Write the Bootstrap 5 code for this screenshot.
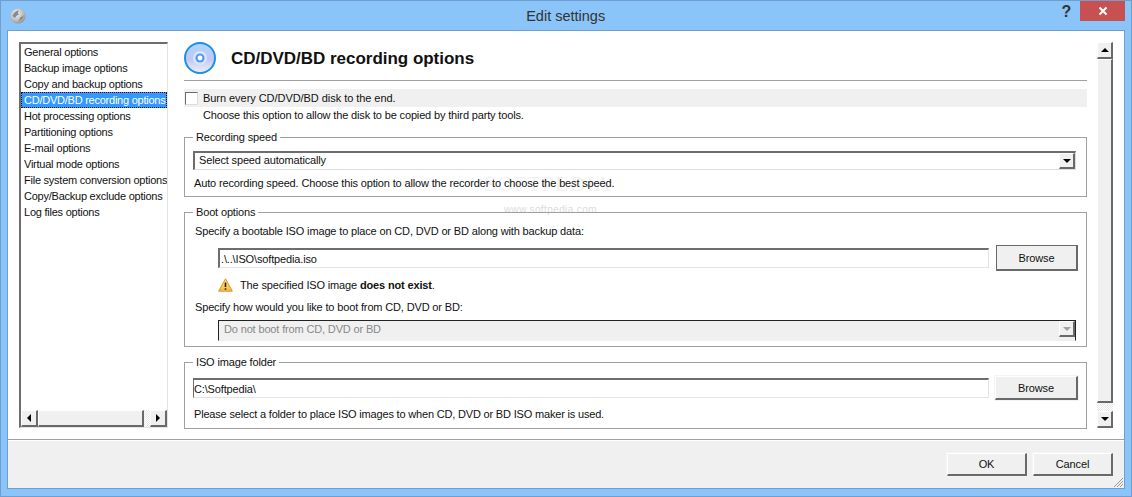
<!DOCTYPE html>
<html><head><meta charset="utf-8">
<link href="https://cdn.jsdelivr.net/npm/bootstrap@5.3.0/dist/css/bootstrap.min.css" rel="stylesheet">
<style>
html,body{margin:0;height:497px;overflow:hidden;background:#8ac4f8}
body{font-family:"Liberation Sans",Arial,sans-serif;font-size:11px;letter-spacing:-.15px;line-height:16px;color:#111}
.wnd{height:497px;border:1px solid #6f9fd0;display:flex;flex-direction:column;background:#8ac4f8}
.ttl{height:29px;flex:none}
.ttl-name{font-size:14.5px;letter-spacing:0;color:#333;line-height:30px;padding-left:44px}
.ttl-ico{margin:7px 0 0 9px}
.ttl-help{font-weight:700;font-size:16px;color:#333;margin-right:9px;line-height:22px}
.ttl-close{width:45px;height:20px;background:#c75050;margin-right:6px;align-items:center;justify-content:center}
.client{flex:1;margin:0 6px 7px 6px;border:1px solid #6f9fd0;background:#fff;display:flex;flex-direction:column;min-height:0}
.body-a{flex:1;min-height:0;padding:11px 11px 12px 11px;position:relative;z-index:1}
.navbox{width:149px;height:386px;flex:none;border:1px solid #e3e3e3;border-top:2px solid #6d6d6d;border-left:2px solid #6d6d6d;display:flex;flex-direction:column}
.navlist{flex:1;overflow:hidden;border-radius:0}
.navlist .list-group-item.navitem{border:0;padding:0 0 0 3px;margin:0;height:16px;line-height:16px;font-size:11px;letter-spacing:-.24px;white-space:nowrap;overflow:hidden;color:#111;background:transparent}
.navlist .list-group-item.navitem.active{background:#3399ff;color:#fff;outline:1px dotted #111;outline-offset:-1px}
.hscroll{height:17px;background:#f0f0f0;flex:none;display:flex}
.sb-btn{background:#f0f0f0;border:1px solid #fff;border-right:2px solid #696969;border-bottom:2px solid #696969;display:flex;align-items:center;justify-content:center;flex:none}
.hs-btn{width:17px;height:17px}
.hs-thumb{width:106px;height:17px;flex:none}
.hs-gap{flex:1;background:repeating-conic-gradient(#fff 0 25%,#e8e8e8 0 50%) 0 0/2px 2px}
.tri-l{width:0;height:0;border:4px solid transparent;border-right:4px solid #000;border-left:0}
.tri-r{width:0;height:0;border:4px solid transparent;border-left:4px solid #000;border-right:0}
.tri-u{width:0;height:0;border:4px solid transparent;border-bottom:4px solid #000;border-top:0}
.tri-d{width:0;height:0;border:4px solid transparent;border-top:4px solid #000;border-bottom:0}
.tri-dg{border-top-color:#a0a0a0}
.pane{width:903px;flex:none;margin-left:16px}
.hd{height:39px;gap:15px;border-bottom:1px solid #a0a0a0}
.hd-t{font-size:17px;letter-spacing:-.02px;font-weight:700;color:#111;margin:1px 0 0;line-height:32px}
.opt-row{background:#f0f0f0;height:18px;margin-top:8px;padding-left:1px;gap:5px;line-height:18px;letter-spacing:-.05px}
.chk{width:13px;height:13px;background:#fff;border:1px solid #6d6d6d;border-right-color:#ddd;border-bottom-color:#ddd;flex:none}
.opt-sub{padding-left:19px}
.gbox{border:1px solid #a0a0a0;margin:0;padding:0 8px;min-width:0}
.gbox legend{float:none;width:auto;font-size:11px;line-height:14px;margin:0;padding:0 3px;color:#111}
.gb1{margin-top:7px;height:67px}
.gb2{margin-top:8px;height:142px}
.gb3{margin-top:8px;height:74px}
.combo{height:19px;border:2px solid #6d6d6d;border-right:1px solid #ddd;border-bottom:1px solid #ddd;padding:0 0 0 4px;background:#fff;line-height:15px;color:#111;display:flex;justify-content:space-between;margin-right:2px}
.combo-arrow{width:16px;height:16px;background:#f0f0f0;border:1px solid #fff;border-right:2px solid #696969;border-bottom:2px solid #696969;display:flex;align-items:center;justify-content:center;flex:none}
.combo-dis{height:21px;background:#f0f0f0;color:#888;border:1px solid #222;border-bottom-color:#eee;line-height:17px;margin-left:25px;margin-top:5px;padding-left:5px}
.gb1 .combo{margin-top:7px}
.after-combo{margin-top:5px;padding-left:1px}
.fld{border:1px solid #e3e3e3;border-top:2px solid #6d6d6d;border-left:2px solid #6d6d6d;border-radius:0;height:20px;padding:0 0 0 1px;font-size:11px;letter-spacing:-.15px;line-height:16px;color:#111;box-shadow:none;min-width:0}
.fld-iso{padding-left:0;border-left-width:1px}
.pbtn{font-size:11px;letter-spacing:-.15px;line-height:16px;color:#111;background:#f0f0f0;border-radius:0;border:1px solid #fff;border-right:2px solid #696969;border-bottom:2px solid #696969;padding:0;box-shadow:0 0 0 1px #f4f4f4;flex:none}
.pbtn-def{border-color:#696969;border-width:1px 2px 2px 1px;box-shadow:none}
.w-browse{width:83px;height:24px}
.w-browse-d{width:82px;height:26px}
.w-foot{width:80px;height:23px}
.row-boot{gap:7px;margin:6px 0 0 25px}
.row-warn{gap:7px;margin:6px 0 0 25px}
.row-lbl{margin-top:6px;padding-left:2px}
.row-iso{gap:6px;margin-top:7px}
.lbl1{margin-top:4px;padding-left:2px}
.after-iso{margin-top:6px;padding-left:1px;letter-spacing:-.18px}
.vscroll{width:16px;height:386px;flex:none;margin-left:10px;background:#f0f0f0;display:flex;flex-direction:column}
.vs-btn{height:17px;width:16px}
.vs-thumb{height:344px;width:16px}
.vs-gap{flex:1;background:repeating-conic-gradient(#fff 0 25%,#e8e8e8 0 50%) 0 0/2px 2px}
.foot{height:49px;flex:none;background:#f0f0f0;border-top:1px solid #a0a0a0;box-shadow:inset 0 1px 0 #fff;padding:13px 11px 0 0;gap:6px;position:relative;z-index:1}
.grip{position:absolute;right:0;bottom:0;width:12px;height:12px}
.wm{position:absolute;left:503px;top:203px;font-size:10px;color:#dcdcdc;letter-spacing:.4px;line-height:12px;z-index:0}
.wm2{position:absolute;left:483px;top:171px;font-family:"Liberation Serif",serif;font-size:22px;color:#f1f1f1;letter-spacing:1px;line-height:24px;z-index:0}
</style></head>
<body>
<div class="wnd position-relative">
 <div class="ttl d-flex align-items-start">
  <svg class="ttl-ico" width="16" height="16" viewBox="0 0 16 16"><defs><radialGradient id="gl" cx=".4" cy=".35" r=".8"><stop offset="0" stop-color="#f4f4f4"/><stop offset=".6" stop-color="#b8b8b8"/><stop offset="1" stop-color="#777"/></radialGradient></defs><circle cx="8" cy="8" r="7.6" fill="url(#gl)"/><path d="M2.5 8Q4 3 9 2.5Q7 5 9 6.5 6 7 5 10Z" fill="#8a8a8a"/><path d="M8 13.5Q10 12 10 9.5 12 9 13.5 7 14 11 8 13.5Z" fill="#8a8a8a"/></svg>
  <div class="flex-grow-1 text-center ttl-name">Edit settings</div>
  <div class="ttl-help">?</div>
  <div class="ttl-close d-flex"><svg width="10" height="10" viewBox="0 0 10 10"><path d="M1.5 1.5 8.5 8.5M8.5 1.5 1.5 8.5" stroke="#fff" stroke-width="2"/></svg></div>
 </div>
 <div class="client">
  <div class="wm2">SOFTPEDIA</div>
  <div class="wm">www.softpedia.com</div>
  <div class="d-flex body-a">
   <div class="navbox">
    <div class="list-group navlist">
     <div class="list-group-item navitem">General options</div>
     <div class="list-group-item navitem">Backup image options</div>
     <div class="list-group-item navitem">Copy and backup options</div>
     <div class="list-group-item navitem active">CD/DVD/BD recording options</div>
     <div class="list-group-item navitem">Hot processing options</div>
     <div class="list-group-item navitem">Partitioning options</div>
     <div class="list-group-item navitem">E-mail options</div>
     <div class="list-group-item navitem">Virtual mode options</div>
     <div class="list-group-item navitem">File system conversion options</div>
     <div class="list-group-item navitem">Copy/Backup exclude options</div>
     <div class="list-group-item navitem">Log files options</div>
    </div>
    <div class="hscroll">
     <div class="sb-btn hs-btn"><span class="tri-l"></span></div>
     <div class="sb-btn hs-thumb"></div>
     <div class="hs-gap"></div>
     <div class="sb-btn hs-btn"><span class="tri-r"></span></div>
    </div>
   </div>
   <div class="pane">
    <div class="d-flex align-items-start hd">
     <svg width="32" height="32" viewBox="0 0 32 32"><defs><linearGradient id="dg" x1="0" y1="0" x2="0" y2="1"><stop offset="0" stop-color="#a9d8fb"/><stop offset=".55" stop-color="#c3c6f3"/><stop offset="1" stop-color="#eef4fd"/></linearGradient></defs><circle cx="16" cy="16" r="15" fill="url(#dg)" stroke="#1f90df" stroke-width="2"/><circle cx="16" cy="16" r="7" fill="#d8e6fb"/><circle cx="16" cy="16" r="4.6" fill="#5a9be8"/><circle cx="16" cy="16" r="2.4" fill="#fff"/></svg>
     <h1 class="hd-t">CD/DVD/BD recording options</h1>
    </div>
    <div class="d-flex align-items-center opt-row"><span class="chk"></span><span>Burn every CD/DVD/BD disk to the end.</span></div>
    <div class="opt-sub">Choose this option to allow the disk to be copied by third party tools.</div>
    <fieldset class="gbox gb1">
     <legend>Recording speed</legend>
     <div class="combo"><span>Select speed automatically</span><span class="combo-arrow"><span class="tri-d"></span></span></div>
     <div class="after-combo">Auto recording speed. Choose this option to allow the recorder to choose the best speed.</div>
    </fieldset>
    <fieldset class="gbox gb2">
     <legend>Boot options</legend>
     <div class="lbl1">Specify a bootable ISO image to place on CD, DVD or BD along with backup data:</div>
     <div class="d-flex align-items-center row-boot">
      <input class="form-control fld flex-grow-1" value=".\..\ISO\softpedia.iso" readonly>
      <button class="btn pbtn pbtn-def w-browse-d" type="button">Browse</button>
     </div>
     <div class="d-flex align-items-center row-warn">
      <svg width="15" height="14" viewBox="0 0 15 14"><defs><linearGradient id="wg" x1="0" y1="0" x2="0" y2="1"><stop offset="0" stop-color="#ffe98a"/><stop offset="1" stop-color="#f5b93a"/></linearGradient></defs><path d="M7.5.8 14.4 13.2H.6Z" fill="url(#wg)" stroke="#d9962a" stroke-linejoin="round"/><path d="M7.5 4.5V9M7.5 10.2v1.6" stroke="#222" stroke-width="1.6"/></svg>
      <span>The specified ISO image <b>does not exist</b>.</span>
     </div>
     <div class="row-lbl">Specify how would you like to boot from CD, DVD or BD:</div>
     <div class="combo combo-dis"><span>Do not boot from CD, DVD or BD</span><span class="combo-arrow"><span class="tri-d tri-dg"></span></span></div>
    </fieldset>
    <fieldset class="gbox gb3">
     <legend>ISO image folder</legend>
     <div class="d-flex align-items-center row-iso">
      <input class="form-control fld fld-iso flex-grow-1" value="C:\Softpedia\" readonly>
      <button class="btn pbtn w-browse" type="button">Browse</button>
     </div>
     <div class="after-iso">Please select a folder to place ISO images to when CD, DVD or BD ISO maker is used.</div>
    </fieldset>
   </div>
   <div class="vscroll">
    <div class="sb-btn vs-btn"><span class="tri-u"></span></div>
    <div class="sb-btn vs-thumb"></div>
    <div class="vs-gap"></div>
    <div class="sb-btn vs-btn"><span class="tri-d"></span></div>
   </div>
  </div>
  <div class="foot d-flex justify-content-end align-items-start">
   <button class="btn pbtn w-foot" type="button">OK</button>
   <button class="btn pbtn w-foot" type="button">Cancel</button>
   <svg class="grip" viewBox="0 0 12 12"><path d="M11 2 2 11M11 5 5 11M11 8 8 11" stroke="#999" stroke-width="1"/></svg>
  </div>
 </div>
</div>
</body></html>
